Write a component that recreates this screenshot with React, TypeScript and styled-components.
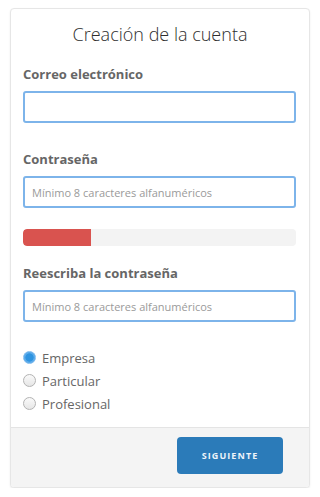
import React, { useState } from "react";
import styled, { createGlobalStyle } from "styled-components";

const Global = createGlobalStyle`
  html, body { margin: 0; padding: 0; background: #ffffff; }
  body { font-family: "Open Sans", "Liberation Sans", sans-serif; }
  * { box-sizing: border-box; }
`;

const Card = styled.div`
  margin: 8px 10px 0 10px;
  width: 300px;
  border: 1px solid #e6e6e6;
  border-radius: 4px;
  box-shadow: 0 1px 2px rgba(0, 0, 0, 0.08);
  background: #fff;
  overflow: hidden;
`;

const Body = styled.div`
  padding: 14px 12px 12px 12px;
  display: flex;
  flex-direction: column;
`;

const Title = styled.h3`
  margin: 0 0 19px 0;
  font-size: 18px;
  line-height: 22px;
  font-weight: 300;
  color: #2e2e2e;
  text-align: center;
`;

const Label = styled.label`
  display: block;
  font-size: 13px;
  line-height: 20px;
  font-weight: 700;
  color: #666;
  margin: 0 0 7px 0;
`;

const Input = styled.input<{ $mb: number }>`
  display: block;
  width: 273px;
  height: 32px;
  border: 2px solid #7db4ea;
  border-radius: 3px;
  padding: 0 7px;
  font-family: "Open Sans", "Liberation Sans", sans-serif;
  font-size: 11px;
  color: #555;
  outline: none;
  margin-bottom: ${(p) => p.$mb}px;
  &::placeholder { color: #9a9a9a; }
`;

const Progress = styled.div`
  width: 273px;
  height: 17px;
  background: #f3f3f3;
  border-radius: 4px;
  overflow: hidden;
  margin-bottom: 17px;
`;

const Bar = styled.div`
  height: 100%;
  background: #d9534f;
  border-radius: 4px 0 0 4px;
`;

const Radios = styled.div`
  display: flex;
  flex-direction: column;
  margin-top: 4px;
`;

const RadioRow = styled.label`
  display: flex;
  align-items: center;
  height: 23px;
  font-size: 13px;
  color: #666;
  cursor: pointer;
`;

const Dot = styled.span<{ $on: boolean }>`
  width: 13px;
  height: 13px;
  border-radius: 50%;
  margin-right: 6px;
  flex: none;
  border: 1px solid ${(p) => (p.$on ? "#7fbbed" : "#b3b3b3")};
  background: ${(p) =>
    p.$on
      ? "radial-gradient(circle, #2f94e0 0 3.8px, #5aaaea 4.4px)"
      : "linear-gradient(#fafafa, #e6e6e6)"};
`;

const Footer = styled.div`
  background: #f4f4f4;
  border-top: 1px solid #e4e4e4;
  padding: 9px 26px 13px 0;
  display: flex;
  justify-content: flex-end;
`;

const Button = styled.button`
  width: 106px;
  height: 37px;
  border: none;
  border-radius: 4px;
  background: #2b7bb9;
  color: #eef4fa;
  font-family: "Open Sans", "Liberation Sans", sans-serif;
  font-weight: 700;
  font-size: 9px;
  letter-spacing: 1.1px;
  cursor: pointer;
`;

const options = ["Empresa", "Particular", "Profesional"];

export default function App() {
  const [sel, setSel] = useState("Empresa");
  return (
    <>
      <Global />
      <Card>
        <Body>
          <Title>Creación de la cuenta</Title>
          <Label>Correo electrónico</Label>
          <Input $mb={26} type="email" />
          <Label>Contraseña</Label>
          <Input $mb={21} type="password" placeholder="Mínimo 8 caracteres alfanuméricos" />
          <Progress>
            <Bar style={{ width: "25%" }} />
          </Progress>
          <Label>Reescriba la contraseña</Label>
          <Input $mb={20} type="password" placeholder="Mínimo 8 caracteres alfanuméricos" />
          <Radios>
            {options.map((o) => (
              <RadioRow key={o} onClick={() => setSel(o)}>
                <Dot $on={sel === o} />
                {o}
              </RadioRow>
            ))}
          </Radios>
        </Body>
        <Footer>
          <Button>SIGUIENTE</Button>
        </Footer>
      </Card>
    </>
  );
}
